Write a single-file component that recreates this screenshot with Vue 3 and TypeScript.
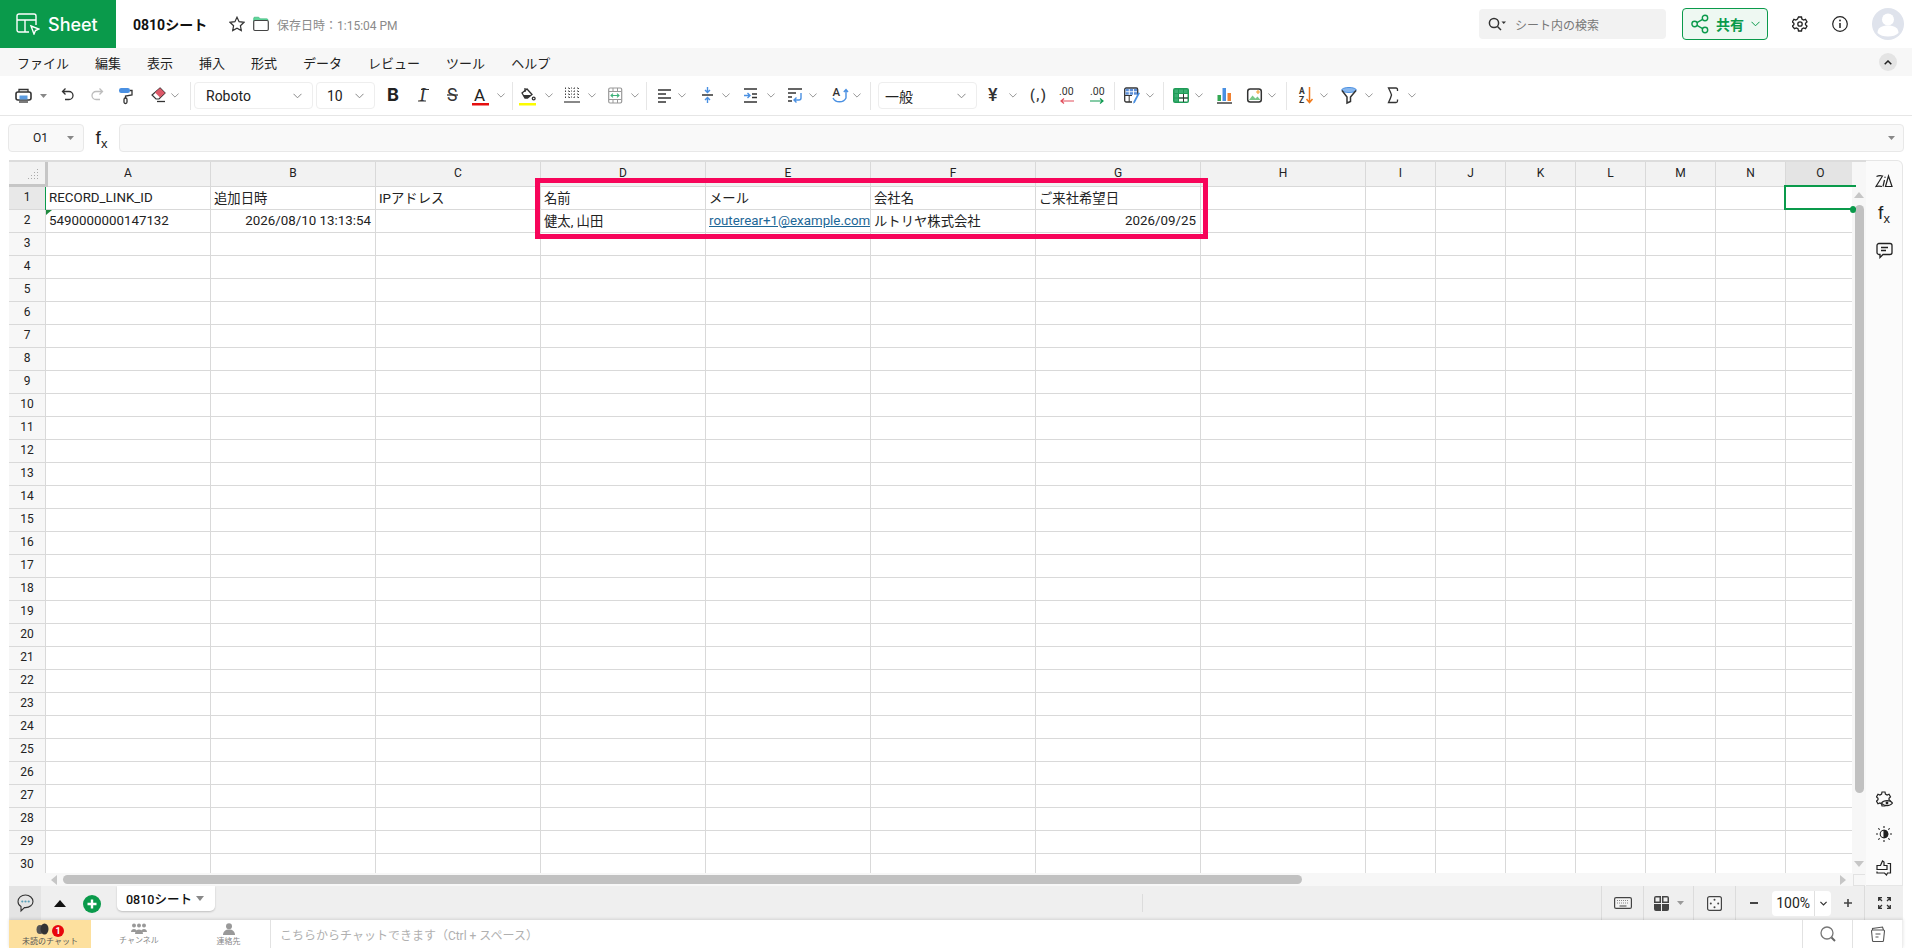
<script setup lang="ts">
interface Tool { w: number; iw?: number; icon?: string; gap?: number; caret?: boolean; sep?: boolean; box?: string; bw?: number; pad?: number }

const K = 'stroke="#333" fill="none" stroke-width="1.3"'
const B = 'stroke="#4a90e2" fill="none" stroke-width="1.4"'
const icons: Record<string, string> = {
  printer: `<path d="M4 7V4.5h9V7" ${K}/><rect x="1" y="7" width="15" height="8" rx="2" stroke="#333" fill="none" stroke-width="1.6"/><rect x="4.5" y="10.5" width="8" height="4" fill="#5b9be0"/><path d="M4 17h9" ${K}/>`,
  undo: `<path d="M4.5 3.5 1.5 6.5l3 3M1.5 6.5H8a4 4 0 0 1 0 8H4" ${K}/>`,
  redo: `<path d="M8.5 3.5l3 3-3 3M11.5 6.5H5a4 4 0 0 0 0 8h4" stroke="#bdbdbd" fill="none" stroke-width="1.3"/>`,
  roller: `<rect x="0" y="3" width="11" height="5" rx="2.2" fill="#4a90e2"/><path d="M11 5.5h2v4.5l-6.5 1v2" ${K}/><rect x="5" y="13" width="3" height="5.5" rx="1.5" ${K}/>`,
  eraser: `<path d="M10 3l5 5-6 6H6L2 10z" stroke="#333" fill="#fff" stroke-width="1.2"/><path d="M10 3l5 5-5 4.5-5-5z" fill="#dc5868"/><path d="M7 16.5h8" ${K}/>`,
  bold: `<text x="0" y="16" font-family="Inter, Roboto, sans-serif" font-size="18" font-weight="700" fill="#222">B</text>`,
  italic: `<text x="2.5" y="15.500" font-family="Liberation Serif, serif" font-style="italic" font-size="18" fill="#333">I</text><path d="M1 16h8M4 4.500h8" stroke="#333" stroke-width="1"/>`,
  strike: `<text x="0" y="16" font-family="Roboto, sans-serif" font-size="17.500" fill="#333">S</text><path d="M0 10h11" ${K}/>`,
  color: `<text x="2" y="15.5" font-family="Roboto, sans-serif" font-size="17" fill="#222">A</text><rect x="0" y="18" width="17" height="2.5" fill="#e60f0f"/>`,
  fill: `<path d="M3 8l5-4 5 5.500-4.500 3.500H6z" stroke="#333" fill="#fff" stroke-width="1.300"/><path d="M6 3v4" ${K}/><path d="M4 10l8 0-3.500 3H6z" fill="#333"/><circle cx="14.700" cy="13.500" r="1.400" ${K}/><rect x="0" y="18" width="17" height="2.500" fill="#fcfc00"/>`,
  borders: `<path d="M1 3h14M1 6h14M1 9h14M1 12h14M1.500 3v10M5.500 3v10M10 3v10M14.500 3v10" stroke="#444" stroke-width="1" stroke-dasharray="1 2" fill="none"/><path d="M0 17h16" stroke="#555" stroke-width="1.400"/>`,
  merge: `<rect x="0.700" y="3" width="13" height="15" rx="1.400" stroke="#999" stroke-width="1.200" fill="#fff"/><path d="M1 6.500h12M1 14.500h12M5 3v3.500M9.500 3v3.500M5 14.500V18M9.500 14.500V18" stroke="#999" fill="none"/><path d="M3 10.500h8M5 8.600l-2 1.900 2 1.900M9 8.600l2 1.900-2 1.900" stroke="#3db27a" fill="none" stroke-width="1.100"/>`,
  align: `<path d="M0 5h13M0 9h8M0 13h13M0 17h8" stroke="#333" stroke-width="1.500"/>`,
  valign: `<path d="M5.500 2v5M3 5l2.500 2.500L8 5" ${B}/><path d="M0 10h11" stroke="#333" stroke-width="1.500"/><path d="M5.500 18v-5M3 15l2.500-2.500L8 15" ${B}/>`,
  indent: `<path d="M0 4h13M0 17h13M8 9h5M8 12.500h5" stroke="#333" stroke-width="1.400"/><path d="M0 10.500h5.500M3.500 8l2.500 2.500-2.500 2.500" ${B}/>`,
  wrap: `<path d="M0 4h14M0 8h8M0 12h4M0 16h4" stroke="#333" stroke-width="1.400"/><path d="M13 8v5a2 2 0 0 1-2 2H6M8.500 12.500 6 15l2.500 2.500" ${B}/>`,
  rotate: `<text x="0.500" y="11" font-family="Roboto, sans-serif" font-size="11.500" font-weight="500" fill="#333">A</text><path d="M1 13a7 6 0 0 0 13 0V5M11.800 7 14 4.500 16 7" ${B}/>`,
  yen: `<text x="0" y="16" font-family="Roboto, sans-serif" font-size="18" font-weight="500" fill="#333">¥</text>`,
  paren: `<text x="0" y="15" font-family="Roboto, sans-serif" font-size="14" font-weight="500" letter-spacing="1.500" fill="#333">(,)</text>`,
  decl: `<text x="0" y="10" font-family="Roboto, sans-serif" font-size="10.500" fill="#333">.00</text><path d="M15 16H2M5 13.500 2 16l3 2.500" stroke="#e24f5c" fill="none" stroke-width="1.200"/>`,
  deci: `<text x="0" y="10" font-family="Roboto, sans-serif" font-size="10.500" fill="#333">.00</text><path d="M0 16h13M10 13.500l3 2.500-3 2.500" stroke="#0e9a50" fill="none" stroke-width="1.200"/>`,
  cf: `<rect x="0.700" y="3" width="13" height="14" rx="1.500" stroke="#333" fill="none" stroke-width="1.300"/><rect x="1.500" y="3.800" width="3.300" height="2.500" fill="#5b8ed8"/><rect x="5.700" y="3.800" width="3.300" height="2.500" fill="#5b8ed8"/><rect x="9.900" y="3.800" width="3.200" height="2.500" fill="#5b8ed8"/><rect x="1.500" y="7.200" width="3.300" height="2.500" fill="#5b8ed8"/><rect x="5.700" y="7.200" width="3.300" height="2.500" fill="#5b8ed8"/><rect x="9.900" y="7.200" width="3.200" height="2.500" fill="#5b8ed8"/><path d="M1 10.500h7M5.200 10.500V17" stroke="#333" stroke-width="1"/><rect x="8" y="10" width="9" height="8" fill="#fff"/><path d="M16 8l-5 9.500-1.800 1.300.3-2.400 4.700-9z" fill="#4a90e2"/>`,
  table: `<rect x="0" y="3" width="16" height="15" rx="2" fill="#1f9b57"/><rect x="1.500" y="4.500" width="3.500" height="3.500" fill="#3bb073"/><rect x="6" y="4.500" width="4" height="3.500" fill="#3bb073"/><rect x="11" y="4.500" width="3.500" height="3.500" fill="#3bb073"/><rect x="1.500" y="9" width="3.500" height="3.500" fill="#3bb073"/><rect x="1.500" y="13.500" width="3.500" height="3" fill="#3bb073"/><rect x="6" y="9" width="4" height="3.500" fill="#fff"/><rect x="11" y="9" width="3.500" height="3.500" fill="#fff"/><rect x="6" y="13.500" width="4" height="3" fill="#fff"/><rect x="11" y="13.500" width="3.500" height="3" fill="#fff"/><path d="M10.500 9v8M6 13h9" stroke="#333" stroke-width="1"/>`,
  chart: `<rect x="0.500" y="10" width="3.500" height="6" fill="#34a853"/><rect x="5.500" y="3" width="3.500" height="13" fill="#4a90e2"/><rect x="10.500" y="8" width="3.500" height="8" fill="#f08030"/><path d="M0 18h15" stroke="#333" stroke-width="1.400"/>`,
  image: `<rect x="0.700" y="4" width="13.600" height="13" rx="2.500" stroke="#333" fill="#fff" stroke-width="1.500"/><path d="M2 15l3.500-4.500 3 3 2-2 3 3.500z" fill="#79c788"/><path d="M11 5v4M9 7h4" stroke="#f2a33a" stroke-width="1.200"/>`,
  az: `<text x="0" y="9" font-family="Roboto, sans-serif" font-size="8.500" font-weight="700" fill="#333">A</text><text x="0" y="18" font-family="Roboto, sans-serif" font-size="8.500" font-weight="700" fill="#333">Z</text><path d="M10.500 2v15M7.500 14l3 3.500 3-3.500" stroke="#f07a1a" fill="none" stroke-width="1.500"/>`,
  filter: `<ellipse cx="8" cy="5" rx="7.300" ry="2.500" fill="#8ab8ee" stroke="#4a90e2"/><path d="M1 5.500l5 6.500v6l3.500-1.500V12l5.500-6.500" stroke="#333" fill="none" stroke-width="1.500"/>`,
  sigma: `<path d="M10.500 6V4.500C10.500 3.500 10 3 9 3H1.500c1.500 3 2.500 5 3 7-.5 2-1.500 4.500-3 7.500H9c1 0 1.500-.5 1.500-1.500v-1.500" ${K}/>`,
}

const tools: Tool[] = [
  { w: 46, iw: 17, icon: 'printer', gap: 8, caret: true },
  { w: 30, iw: 13, icon: 'undo' },
  { w: 28, iw: 13, icon: 'redo' },
  { w: 31, iw: 14, icon: 'roller' },
  { w: 40, iw: 16, icon: 'eraser', gap: 5 },
  { w: 4, sep: true },
  { w: 122, box: 'Roboto', bw: 119, pad: 11 },
  { w: 71, box: '10', bw: 59, pad: 10 },
  { w: 30, iw: 14, icon: 'bold' },
  { w: 30, iw: 12, icon: 'italic' },
  { w: 25, iw: 12, icon: 'strike' },
  { w: 40, iw: 17, icon: 'color', gap: 8 },
  { w: 7, sep: true },
  { w: 45, iw: 17, icon: 'fill', gap: 9 },
  { w: 44, iw: 16, icon: 'borders', gap: 8 },
  { w: 38, iw: 14, icon: 'merge', gap: 9 },
  { w: 12, sep: true },
  { w: 44, iw: 13, icon: 'align', gap: 7 },
  { w: 42, iw: 11, icon: 'valign', gap: 9 },
  { w: 44, iw: 13, icon: 'indent', gap: 10 },
  { w: 44, iw: 14, icon: 'wrap', gap: 7 },
  { w: 38, iw: 16, icon: 'rotate', gap: 5 },
  { w: 8, sep: true },
  { w: 110, box: '一般', bw: 99, pad: 6 },
  { w: 42, iw: 12, icon: 'yen', gap: 9 },
  { w: 29, iw: 19, icon: 'paren' },
  { w: 31, iw: 16, icon: 'decl' },
  { w: 24, iw: 16, icon: 'deci' },
  { w: 10, sep: true },
  { w: 39, iw: 17, icon: 'cf', gap: 5 },
  { w: 10, sep: true },
  { w: 44, iw: 16, icon: 'table', gap: 6 },
  { w: 30, iw: 15, icon: 'chart' },
  { w: 39, iw: 15, icon: 'image', gap: 6 },
  { w: 13, sep: true },
  { w: 42, iw: 16, icon: 'az', gap: 5 },
  { w: 46, iw: 16, icon: 'filter', gap: 8 },
  { w: 40, iw: 11, icon: 'sigma', gap: 10 },
]

const menus = ['ファイル', '編集', '表示', '挿入', '形式', 'データ', 'レビュー', 'ツール', 'ヘルプ']
const cols = 'ABCDEFGHIJKLMNO'.split('')
const rows = Array.from({ length: 30 }, (_, i) => i + 1)
const cells: Record<string, { t: string; c?: string }> = {
  A1: { t: 'RECORD_LINK_ID' },
  B1: { t: '追加日時' },
  C1: { t: 'IPアドレス' },
  D1: { t: '名前' },
  E1: { t: 'メール' },
  F1: { t: '会社名' },
  G1: { t: 'ご来社希望日' },
  A2: { t: '5490000000147132' },
  B2: { t: '2026/08/10 13:13:54', c: 'right' },
  D2: { t: '健太, 山田' },
  E2: { t: 'routerear+1@example.com', c: 'link' },
  F2: { t: 'ルトリヤ株式会社' },
  G2: { t: '2026/09/25', c: 'right' },
}
</script>

<template>
  <div class="app">
    <header class="topbar">
      <div class="logo">
        <svg width="24" height="22" viewBox="0 0 24 22" fill="none" stroke="#fff" stroke-width="1.400">
          <path d="M13 19H3a2 2 0 0 1-2-2V3a2 2 0 0 1 2-2h15a2 2 0 0 1 2 2v9" />
          <path d="M1 7h19M9 7v12" />
          <path d="M15 13l8 3-3.500 1.500-1.500 3.500z" />
        </svg>
        <span>Sheet</span>
      </div>
      <div class="title">0810シート</div>
      <svg class="star" width="16" height="16" viewBox="0 0 16 16" fill="none" stroke="#333" stroke-width="1.200">
        <path d="M8 1.200l2.100 4.500 4.900.6-3.600 3.400.9 4.900L8 12.200l-4.300 2.400.9-4.900L1 6.300l4.900-.6z" />
      </svg>
      <svg class="folder" width="16" height="16" viewBox="0 0 16 16">
        <path d="M0.700 4V2.200c0-.6.4-1 1-1h4l1.500 1.600h6.600c.6 0 1 .4 1 1V5H.7z" fill="#5fd69a" stroke="#2fae72" stroke-width="0.600" />
        <rect x="0.700" y="4.500" width="14.600" height="10" rx="1.200" fill="#fff" stroke="#444" stroke-width="1.200" />
      </svg>
      <div class="saved">保存日時：1:15:04 PM</div>
      <div class="top-right">
        <div class="search">
          <svg width="18" height="14" viewBox="0 0 18 14" fill="none" stroke="#333" stroke-width="1.500">
            <circle cx="6" cy="6" r="4.600" />
            <path d="M9.500 9.500L13 13" />
            <path d="M13.500 4.500h4.500l-2.250 2.600z" fill="#333" stroke="none" />
          </svg>
          <span>シート内の検索</span>
        </div>
        <div class="share">
          <svg width="18" height="20" viewBox="0 0 18 20" fill="none" stroke="#0a9a4b" stroke-width="1.400">
            <circle cx="3.600" cy="10" r="2.700" />
            <circle cx="14" cy="4" r="2.700" />
            <circle cx="14" cy="16" r="2.700" />
            <path d="M6 8.600l5.600-3.200M6 11.400l5.600 3.200" />
          </svg>
          <span>共有</span>
          <svg width="9" height="6" viewBox="0 0 9 6" fill="none" stroke="#0a9a4b" stroke-width="1">
            <path d="M.5.800l4 4 4-4" />
          </svg>
        </div>
        <svg class="gear" width="16" height="16" viewBox="0 0 16 16" fill="none" stroke="#222" stroke-width="1.300">
          <path d="M6.500 1h3l.4 2 1.700 1 1.900-.7 1.500 2.600-1.500 1.300v1.600l1.500 1.300-1.500 2.600-1.900-.7-1.700 1-.4 2h-3l-.4-2-1.700-1-1.900.7L.4 10.100l1.500-1.300V7.200L.4 5.900l1.500-2.600 1.900.7 1.700-1z" />
          <circle cx="8" cy="8" r="2.200" />
        </svg>
        <svg class="info" width="16" height="16" viewBox="0 0 16 16" fill="none" stroke="#222" stroke-width="1.200">
          <circle cx="8" cy="8" r="7.300" />
          <path d="M8 7v5" stroke-width="1.500" />
          <circle cx="8" cy="4.500" r="0.900" fill="#222" stroke="none" />
        </svg>
        <div class="avatar">
          <svg width="32" height="32" viewBox="0 0 32 32" fill="#fff">
            <circle cx="16" cy="11.500" r="6" />
            <path d="M5.500 25c0-5.500 4.500-7.500 10.500-7.500S26.500 19.500 26.500 25c-2.500 2.500-6 3.500-10.500 3.500S8 27.500 5.500 25z" />
          </svg>
        </div>
      </div>
    </header>

    <nav class="menu">
      <span v-for="m in menus" :key="m">{{ m }}</span>
      <div class="collapse">
        <svg width="8" height="5" viewBox="0 0 8 5" fill="none" stroke="#222" stroke-width="1.500"><path d="M.7 4.300L4 1l3.300 3.300" /></svg>
      </div>
    </nav>

    <div class="toolbar">
      <div v-for="(t, i) in tools" :key="i" class="tool" :style="{ width: t.w + 'px' }">
        <i v-if="t.sep" class="sep"></i>
        <div v-else-if="t.box" class="box" :style="{ width: t.bw + 'px', paddingLeft: t.pad + 'px' }">
          <span>{{ t.box }}</span>
          <svg width="9" height="6" viewBox="0 0 9 6" fill="none" stroke="#888" stroke-width="1"><path d="M.5.800l4 4 4-4" /></svg>
        </div>
        <template v-else>
          <svg :width="t.iw" height="21" :viewBox="`0 0 ${t.iw} 21`" class="ticon" v-html="icons[t.icon as string]"></svg>
          <svg v-if="t.caret" class="chev" :style="{ marginLeft: t.gap + 'px' }" width="7" height="4" viewBox="0 0 7 4"><path d="M0 0h7L3.500 4z" fill="#888" /></svg>
          <svg v-else-if="t.gap" class="chev" :style="{ marginLeft: t.gap + 'px' }" width="8" height="5" viewBox="0 0 8 5" fill="none" stroke="#999" stroke-width="1"><path d="M.4.500L4 4.100 7.600.500" /></svg>
        </template>
      </div>
    </div>

    <div class="formula">
      <div class="namebox">
        <span>O1</span>
        <svg width="7" height="4" viewBox="0 0 7 4"><path d="M0 0h7L3.500 4z" fill="#888" /></svg>
      </div>
      <div class="fx"><i>f</i><sub>x</sub></div>
      <div class="input">
        <svg width="7" height="4" viewBox="0 0 7 4"><path d="M0 0h7L3.500 4z" fill="#888" /></svg>
      </div>
    </div>

    <div class="sheet">
      <div class="gridwrap">
        <div class="gridview">
          <div class="grid">
            <div class="corner">
              <svg width="12" height="12" viewBox="0 0 12 12" fill="#aaa">
                <rect x="9" y="1" width="1" height="1" /><rect x="6" y="4" width="1" height="1" /><rect x="9" y="4" width="1" height="1" />
                <rect x="3" y="7" width="1" height="1" /><rect x="6" y="7" width="1" height="1" /><rect x="9" y="7" width="1" height="1" />
                <rect x="0" y="10" width="1" height="1" /><rect x="3" y="10" width="1" height="1" /><rect x="6" y="10" width="1" height="1" /><rect x="9" y="10" width="1" height="1" />
              </svg>
            </div>
            <div v-for="c in cols" :key="c" class="colhead" :class="{ active: c === 'O' }">{{ c }}</div>
            <template v-for="r in rows" :key="r">
              <div class="rowhead" :class="{ active: r === 1 }">{{ r }}</div>
              <div v-for="c in cols" :key="c" class="cell" :class="cells[c + r]?.c">
                <span v-if="cells[c + r]">{{ cells[c + r].t }}</span>
              </div>
            </template>
          </div>
          <div class="vscroll">
            <i class="arr up"></i>
            <i class="vthumb"></i>
            <i class="arr down"></i>
          </div>
          <div class="a1mark"></div>
          <div class="tri"></div>
          <div class="selection"></div>
          <div class="handle"></div>
          <div class="redbox"></div>
        </div>
        <div class="hscroll">
          <i class="arr left"></i>
          <i class="hthumb"></i>
          <i class="arr right"></i>
          <i class="cornerbox"></i>
        </div>
      </div>
      <aside class="side">
        <svg width="18" height="14" viewBox="0 0 18 14" fill="none" stroke="#222" stroke-width="1.200">
          <path d="M1.500 2.500c2-1 4-1 6-.5L1 12.500c2-.5 4-.5 6 0" />
          <path d="M9.500 6L8 12.500" />
          <circle cx="10" cy="3.200" r="0.700" fill="#222" stroke="none" />
          <path d="M13.500 2l-3 10.500h6.500z" />
        </svg>
        <div class="fx side-fx"><i>f</i><sub>x</sub></div>
        <svg width="17" height="17" viewBox="0 0 17 17" fill="none" stroke="#222" stroke-width="1.300">
          <path d="M3 1.500h11a2 2 0 0 1 2 2v7a2 2 0 0 1-2 2H7l-3 3v-3H3a2 2 0 0 1-2-2v-7a2 2 0 0 1 2-2z" />
          <path d="M5 5.500h7M5 8.500h5" />
        </svg>
        <div class="spacer"></div>
        <svg width="17" height="17" viewBox="0 0 17 17" fill="none" stroke="#222" stroke-width="1.200">
          <path d="M6 1h3l.4 2 1.700 1 1.900-.7 1.500 2.600-1.500 1.300v1.600l1.500 1.300-1.500 2.600-1.900-.7-1.700 1-.4 2H6l-.4-2-1.700-1-1.900.7-1.500-2.600 1.500-1.300V7.200L.5 5.900 2 3.300l1.900.7 1.700-1z" />
          <path d="M5.500 12c2.300-3.300 8.700-3.300 11 0-2.300 3.400-8.700 3.400-11 0z" fill="#fbfbfb" />
          <circle cx="11" cy="12" r="1.400" fill="#222" stroke="none" />
        </svg>
        <svg class="sun" width="16" height="16" viewBox="0 0 16 16" fill="none" stroke="#222" stroke-width="1.100">
          <circle cx="8" cy="8" r="3.800" />
          <path d="M8 4.200a3.800 3.800 0 0 1 0 7.600z" fill="#222" />
          <path d="M8 0v2M8 14v2M0 8h2M14 8h2M2.300 2.300l1.400 1.400M12.300 12.300l1.400 1.400M2.300 13.700l1.400-1.400M12.300 3.700l1.400-1.400" />
        </svg>
        <svg class="fb" width="16" height="16" viewBox="0 0 16 16" fill="none" stroke="#222" stroke-width="1.200">
          <path d="M1 5.500h3.500L6.500 1 8 2v3.500h3v4H1z" />
          <path d="M11.500 3.500h3v9.500h-3l-1 2-2-2H1v-1.500" />
        </svg>
      </aside>
    </div>

    <div class="tabbar">
      <div class="commentbtn">
        <svg width="17" height="19" viewBox="0 0 17 19" fill="none" stroke="#333" stroke-width="1.100">
          <path d="M8.500 1C4.300 1 1 3.700 1 7.500c0 2.300 1 4 3 5.100v4.400l3.500-3.400h1c4.200 0 7.500-2.800 7.500-6.100S12.700 1 8.500 1z" />
          <circle cx="5.300" cy="7.500" r="1.100" fill="#5aa0b8" stroke="none" />
          <circle cx="8.500" cy="7.500" r="1.100" fill="#5aa0b8" stroke="none" />
          <circle cx="11.700" cy="7.500" r="1.100" fill="#5aa0b8" stroke="none" />
        </svg>
      </div>
      <svg class="uptri" width="12" height="7" viewBox="0 0 12 7"><path d="M6 0l6 7H0z" fill="#111" /></svg>
      <svg class="addtab" width="18" height="18" viewBox="0 0 18 18">
        <circle cx="9" cy="9" r="9" fill="#0a9a4b" />
        <path d="M9 4.500v9M4.500 9h9" stroke="#fff" stroke-width="2.400" />
      </svg>
      <div class="tab">
        <span>0810シート</span>
        <svg width="8" height="5" viewBox="0 0 8 5"><path d="M0 0h8L4 5z" fill="#888" /></svg>
      </div>
      <i class="tabsep"></i>
      <div class="tab-right">
        <div class="tb kb">
          <svg width="18" height="12" viewBox="0 0 18 12">
            <rect x=".6" y=".6" width="16.800" height="10.800" rx="1.500" fill="#f4f4f4" stroke="#444" stroke-width="1.200" />
            <path d="M3 3.500h12M3 6h12" stroke="#888" stroke-dasharray="1 1" fill="none" />
            <path d="M5.500 9h7" stroke="#444" />
          </svg>
        </div>
        <div class="tb layout">
          <svg width="15" height="15" viewBox="0 0 15 15" fill="#444">
            <path d="M2 0h5v7H0V2a2 2 0 0 1 2-2zM8 0h5a2 2 0 0 1 2 2v5H8zM0 8h7v7H2a2 2 0 0 1-2-2zM8 8h7v5a2 2 0 0 1-2 2H8z" fill-rule="evenodd" />
            <path d="M1.500 1.500h4v4h-4zM9.500 1.500h4v4h-4z" fill="#efefef" />
          </svg>
          <svg width="7" height="4" viewBox="0 0 7 4"><path d="M0 0h7L3.500 4z" fill="#999" /></svg>
        </div>
        <div class="tb nav">
          <svg width="15" height="15" viewBox="0 0 15 15">
            <rect x=".6" y=".6" width="13.800" height="13.800" rx="2" fill="#f7f7f7" stroke="#444" stroke-width="1.200" />
            <circle cx="7.500" cy="3.800" r="1" fill="#444" /><circle cx="7.500" cy="11.200" r="1" fill="#444" />
            <circle cx="3.800" cy="7.500" r="1" fill="#444" /><circle cx="11.200" cy="7.500" r="1" fill="#444" />
          </svg>
        </div>
        <div class="tb zoom">
          <svg width="8" height="2" viewBox="0 0 8 2"><path d="M0 1h8" stroke="#444" stroke-width="2" /></svg>
          <div class="zoombox">
            <span>100%</span>
            <div class="zoomchev"><svg width="7" height="5" viewBox="0 0 7 5" fill="none" stroke="#333" stroke-width="1.200"><path d="M.4.800L3.500 4 6.600.800" /></svg></div>
          </div>
          <svg width="8" height="8" viewBox="0 0 8 8"><path d="M0 4h8M4 0v8" stroke="#444" stroke-width="1.600" /></svg>
        </div>
        <div class="tb full">
          <svg width="13" height="12" viewBox="0 0 13 12" fill="none" stroke="#333" stroke-width="1.300">
            <path d="M0.700 4V.700H4M1 1l3 3M12.300 4V.700H9M12 1L9 4M.7 8v3.300H4M1 11l3-3M12.300 8v3.300H9M12 11L9 8" />
          </svg>
        </div>
      </div>
    </div>

    <div class="chatbar">
      <div class="ch unread">
        <svg class="chat-ic" width="13" height="12" viewBox="0 0 13 12" fill="#555">
          <ellipse cx="4" cy="6.500" rx="3.500" ry="4.500" />
          <ellipse cx="8.500" cy="6" rx="4" ry="5.500" fill="#333" />
        </svg>
        <b class="badge">1</b>
        <span>未読のチャット</span>
      </div>
      <div class="ch channel">
        <svg width="16" height="11" viewBox="0 0 16 11" fill="#999">
          <circle cx="3" cy="2.500" r="2" /><circle cx="8" cy="2.500" r="2" /><circle cx="13" cy="2.500" r="2" />
          <path d="M0 9c0-2 1.500-3 3-3s3 1 3 3zM4 11c0-3 2-4.500 4-4.500s4 1.500 4 4.500zM10 9c0-2 1.500-3 3-3s3 1 3 3z" />
        </svg>
        <span>チャンネル</span>
      </div>
      <div class="ch contact">
        <svg width="12" height="12" viewBox="0 0 12 12" fill="#999">
          <circle cx="6" cy="3.200" r="3" />
          <path d="M0 12c0-3.500 2.500-5.500 6-5.500s6 2 6 5.500z" />
        </svg>
        <span>連絡先</span>
      </div>
      <div class="placeholder">こちらからチャットできます（Ctrl + スペース）</div>
      <div class="cbtn">
        <svg width="16" height="16" viewBox="0 0 16 16" fill="none" stroke="#777" stroke-width="1.300">
          <circle cx="7" cy="7" r="6" />
          <path d="M11.500 11.500L15 15" stroke="#666" stroke-width="2" />
        </svg>
      </div>
      <div class="cbtn">
        <svg width="16" height="16" viewBox="0 0 16 16" fill="none" stroke="#555" stroke-width="1.100">
          <path d="M2.500 4V2.500l10-1.500 1 3" />
          <path d="M1.500 5l1 9.500c0 .5.500 1 1 1h9c.5 0 1-.5 1-1l1-9.500c0-.5-.5-1-1-1h-11c-.5 0-1 .5-1 1z" />
          <path d="M5.500 8h5M5.500 11h3" />
        </svg>
      </div>
    </div>
  </div>
</template>

<style>
html, body { margin: 0; background: #fff; overflow: hidden; }
</style>

<style scoped>
.app {
  width: 1912px;
  height: 948px;
  display: flex;
  flex-direction: column;
  overflow: hidden;
  font-family: Roboto, "Noto Sans CJK JP", sans-serif;
  color: #222;
  background: #fff;
}
.topbar { height: 48px; flex: none; display: flex; align-items: center; }
.logo {
  width: 116px; height: 48px; background: #0a9a4b; color: #fff;
  display: flex; align-items: center; gap: 8px; padding-left: 16px; box-sizing: border-box;
  font-family: Inter, Roboto, sans-serif; font-size: 18px; font-weight: 500;
}
.title { margin-left: 17px; width: 79px; font-size: 14px; font-weight: 700; color: #111; white-space: nowrap; }
.star { margin-left: 17px; }
.folder { margin-left: 8px; }
.saved { margin-left: 8px; font-size: 12px; color: #8a8a8a; white-space: nowrap; }
.top-right { margin-left: auto; display: flex; align-items: center; padding-right: 8px; }
.search {
  width: 187px; height: 30px; background: #f2f2f2; border-radius: 4px; box-sizing: border-box;
  display: flex; align-items: center; padding-left: 9px; gap: 9px; font-size: 12px; color: #777;
}
.share {
  margin-left: 16px; width: 86px; height: 32px; box-sizing: border-box; border: 1px solid #0a9a4b; border-radius: 4px;
  background: #eef8f2; display: flex; align-items: center; padding-left: 8px; color: #0a9a4b; font-size: 14px; font-weight: 700;
}
.share span { margin-left: 7px; margin-right: 7px; }
.gear { margin-left: 24px; }
.info { margin-left: 24px; }
.avatar { margin-left: 24px; width: 32px; height: 32px; border-radius: 50%; background: #dfe3ec; overflow: hidden; }
.avatar svg { display: block; }

.menu {
  height: 28px; flex: none; background: #f7f7f7; display: flex; align-items: center; gap: 26px;
  padding-left: 17px; font-size: 13px; color: #222; position: relative;
}
.collapse {
  margin-left: auto; margin-right: 15px; width: 18px; height: 18px; border-radius: 50%; background: #e4e4e4;
  display: flex; align-items: center; justify-content: center;
}
.toolbar {
  height: 40px; flex: none; box-sizing: border-box; border-bottom: 1px solid #e6e6e6;
  display: flex; align-items: center; padding-left: 15px;
}
.tool { flex: none; display: flex; align-items: center; height: 39px; }
.ticon { flex: none; overflow: visible; }
.sep { width: 1px; height: 28px; background: #e6e6e6; display: block; }
.box {
  height: 27px; box-sizing: border-box; border: 1px solid #eee; border-radius: 4px;
  display: flex; align-items: center; justify-content: space-between; padding-right: 10px; font-size: 14px; color: #222;
}
.formula {
  height: 44px; flex: none; display: flex; align-items: center; padding-left: 8px; padding-right: 8px;
}
.namebox {
  width: 76px; height: 28px; box-sizing: border-box; border: 1px solid #e8e8e8; border-radius: 4px; background: #f9f9f9;
  display: flex; align-items: center; font-size: 12px; padding-left: 24px; gap: 16px;
}
.namebox svg { margin-left: auto; margin-right: 9px; }
.fx { width: 35px; text-align: center; font-family: "Liberation Serif", serif; font-size: 19px; line-height: 20px; color: #222; }
.fx i { font-style: normal; font-family: "Liberation Sans", sans-serif; font-weight: 400; }
.fx sub { font-family: "Liberation Sans", sans-serif; font-size: 13px; vertical-align: -4px; line-height: 0; }
.input {
  flex: 1; height: 28px; box-sizing: border-box; border: 1px solid #e8e8e8; border-radius: 4px; background: #f9f9f9;
  display: flex; align-items: center; justify-content: flex-end; padding-right: 8px;
}
.sheet { height: 726px; flex: none; display: flex; padding: 0 9px; }
.gridwrap { width: 1857px; flex: none; display: flex; flex-direction: column; }
.gridview {
  height: 713px; flex: none; display: flex; position: relative; overflow: hidden;
  border-top: 2px solid #dcdcdc; box-sizing: border-box;
}
.grid {
  width: 1843px; flex: none; overflow: hidden; display: grid;
  grid-template-columns: 37px repeat(8, 165px) repeat(7, 70px);
  grid-auto-rows: 23px;
  grid-template-rows: 25px;
  font-size: 13.330px;
}
.corner {
  background: #f2f2f2; border-right: 3px solid #c6c6c6; border-bottom: 3px solid #c6c6c6; box-sizing: border-box;
  display: flex; align-items: flex-end; justify-content: flex-end; padding: 0 5px 4px 0; margin-right: -2px; position: relative; z-index: 1;
}
.corner svg { display: block; }
.colhead {
  background: #f2f2f2; border-right: 1px solid #d9d9d9; border-bottom: 1px solid #d9d9d9; box-sizing: border-box; padding-bottom: 2px;
  display: flex; align-items: center; justify-content: center; font-size: 12px; color: #222;
}
.colhead.active { background: #e4e4e4; }
.rowhead {
  background: #f7f7f7; border-right: 1px solid #d9d9d9; border-bottom: 1px solid #d9d9d9; box-sizing: border-box; padding-bottom: 2px;
  display: flex; align-items: center; justify-content: center; font-size: 12px; color: #222;
}
.rowhead.active { background: #e8e8e8; }
.cell {
  border-right: 1px solid #d9d9d9; border-bottom: 1px solid #d9d9d9; box-sizing: border-box;
  display: flex; align-items: center; padding: 0 3px 2px; white-space: nowrap; overflow: hidden; color: #222;
}
.cell.right { justify-content: flex-end; padding-right: 4px; }
.cell.link { color: #1d6797; text-decoration: underline; }
.vscroll {
  width: 14px; flex: none; background: #f7f7f7; display: flex; flex-direction: column; align-items: center;
}
.arr { display: block; width: 0; height: 0; border-style: solid; border-color: transparent; }
.arr.up { border-width: 0 5px 6px; border-bottom-color: #c6c6c6; margin-top: 30px; }
.vthumb { width: 9px; height: 588px; margin-top: 7px; background: #c1c1c1; border-radius: 5px; display: block; }
.arr.down { border-width: 6px 5px 0; border-top-color: #c6c6c6; margin-top: 68px; }
.hscroll {
  height: 13px; flex: none; background: #f7f7f7; display: flex; align-items: center; padding-left: 42px;
  box-sizing: border-box; position: relative;
}
.arr.left { border-width: 5px 6px 5px 0; border-right-color: #c6c6c6; }
.hthumb { width: 1239px; height: 9px; margin-left: 6px; background: #c1c1c1; border-radius: 5px; display: block; }
.arr.right { border-width: 5px 0 5px 6px; border-left-color: #c6c6c6; margin-left: 538px; }
.cornerbox { width: 12px; height: 12px; margin-left: 7px; border: 1px solid #e2e2e2; border-right: none; display: block; box-sizing: border-box; }
.a1mark { position: absolute; left: 36px; top: 25px; width: 1px; height: 23px; background: #0a9a4b; }
.tri { position: absolute; left: 37px; top: 48px; width: 0; height: 0; border-style: solid; border-width: 5px 6px 0 0; border-color: #1e8a3e transparent transparent transparent; }
.selection { position: absolute; left: 1775px; top: 23px; width: 72px; height: 25px; box-sizing: border-box; border: 2px solid #0a9a4b; border-right: none; }
.handle { position: absolute; left: 1841px; top: 44px; width: 6px; height: 7px; border-radius: 50%; background: #0a9a4b; }
.redbox { position: absolute; left: 526px; top: 16px; width: 673px; height: 61px; box-sizing: border-box; border: 5px solid #f7055a; }
.side {
  width: 37px; flex: none; box-sizing: border-box; border: 1px solid #e6e6e6; border-left: none; border-radius: 0 6px 0 0; background: #fbfbfb;
  display: flex; flex-direction: column; align-items: center; padding: 13px 0 9px; 
}
.side-fx { width: 100%; margin-top: 15px; margin-bottom: 19px; height: 20px; }
.spacer { flex: 1; }
.sun { margin-top: 18px; }
.fb { margin-top: 18px; }
.tabbar {
  height: 34px; flex: none; margin: 0 9px; background: #efefef; display: flex; align-items: flex-start; box-sizing: border-box; position: relative;
}
.commentbtn { width: 32px; height: 34px; background: #e4e4e4; display: flex; align-items: center; justify-content: center; flex: none; }
.uptri { margin-left: 13px; margin-top: 14px; flex: none; }
.addtab { margin-left: 17px; margin-top: 9px; flex: none; }
.tab {
  margin-left: 16px; width: 98px; height: 25px; background: #fff; border-radius: 0 0 5px 5px; box-sizing: border-box;
  box-shadow: 0 1px 2px rgba(0,0,0,.2); display: flex; align-items: center; padding-left: 9px; gap: 4px; font-size: 12.500px; font-weight: 500; color: #111; flex: none;
}
.tabsep { width: 1px; height: 18px; margin: 8px 0 0 927px; background: #dcdcdc; display: block; flex: none; }
.tab-right { margin-left: auto; display: flex; height: 34px; }
.tb { height: 34px; display: flex; align-items: center; border-left: 1px solid #dcdcdc; box-sizing: border-box; }
.kb { width: 42px; justify-content: center; }
.layout { width: 50px; padding-left: 10px; gap: 8px; }
.nav { width: 42px; justify-content: center; }
.zoom { width: 129px; padding-left: 14px; }
.zoombox {
  margin-left: 14px; width: 59px; height: 25px; background: #fff; border-radius: 4px; display: flex; align-items: center; font-size: 14px; margin-right: 13px; color: #222;
}
.zoombox span { width: 42px; text-align: right; padding-right: 4px; box-sizing: border-box; }
.zoomchev { flex: 1; height: 25px; border-left: 1px solid #e0e0e0; display: flex; align-items: center; justify-content: center; }
.full { width: 39px; justify-content: center; }
.chatbar {
  height: 28px; flex: none; margin: 0 9px; display: flex; align-items: stretch; background: #fff;
  box-shadow: 0 -1px 3px rgba(0,0,0,.12); position: relative; border-right: 1px solid #eee;
}
.ch { position: relative; display: flex; flex-direction: column; align-items: center; justify-content: flex-start; font-size: 8px; color: #888; flex: none; padding-top: 3px; box-sizing: border-box; line-height: 11px; }
.unread { width: 82px; background: #fde09e; color: #555; }
.channel { width: 96px; }
.contact { width: 84px; border-right: 1px solid #e2e2e2; }
.ch svg { flex: none; margin-bottom: 1px; }
.chat-ic { margin-left: -16px; }
.badge {
  position: absolute; left: 43px; top: 5px; width: 12px; height: 12px; border-radius: 50%; background: #e8060c; color: #fff;
  font-size: 9px; line-height: 12px; text-align: center; font-weight: 700;
}
.placeholder { flex: 1; padding-left: 9px; font-size: 12px; color: #b0b0b0; display: flex; align-items: center; }
.cbtn { width: 50px; border-left: 1px solid #e2e2e2; display: flex; align-items: center; justify-content: center; flex: none; box-sizing: border-box; }
</style>
